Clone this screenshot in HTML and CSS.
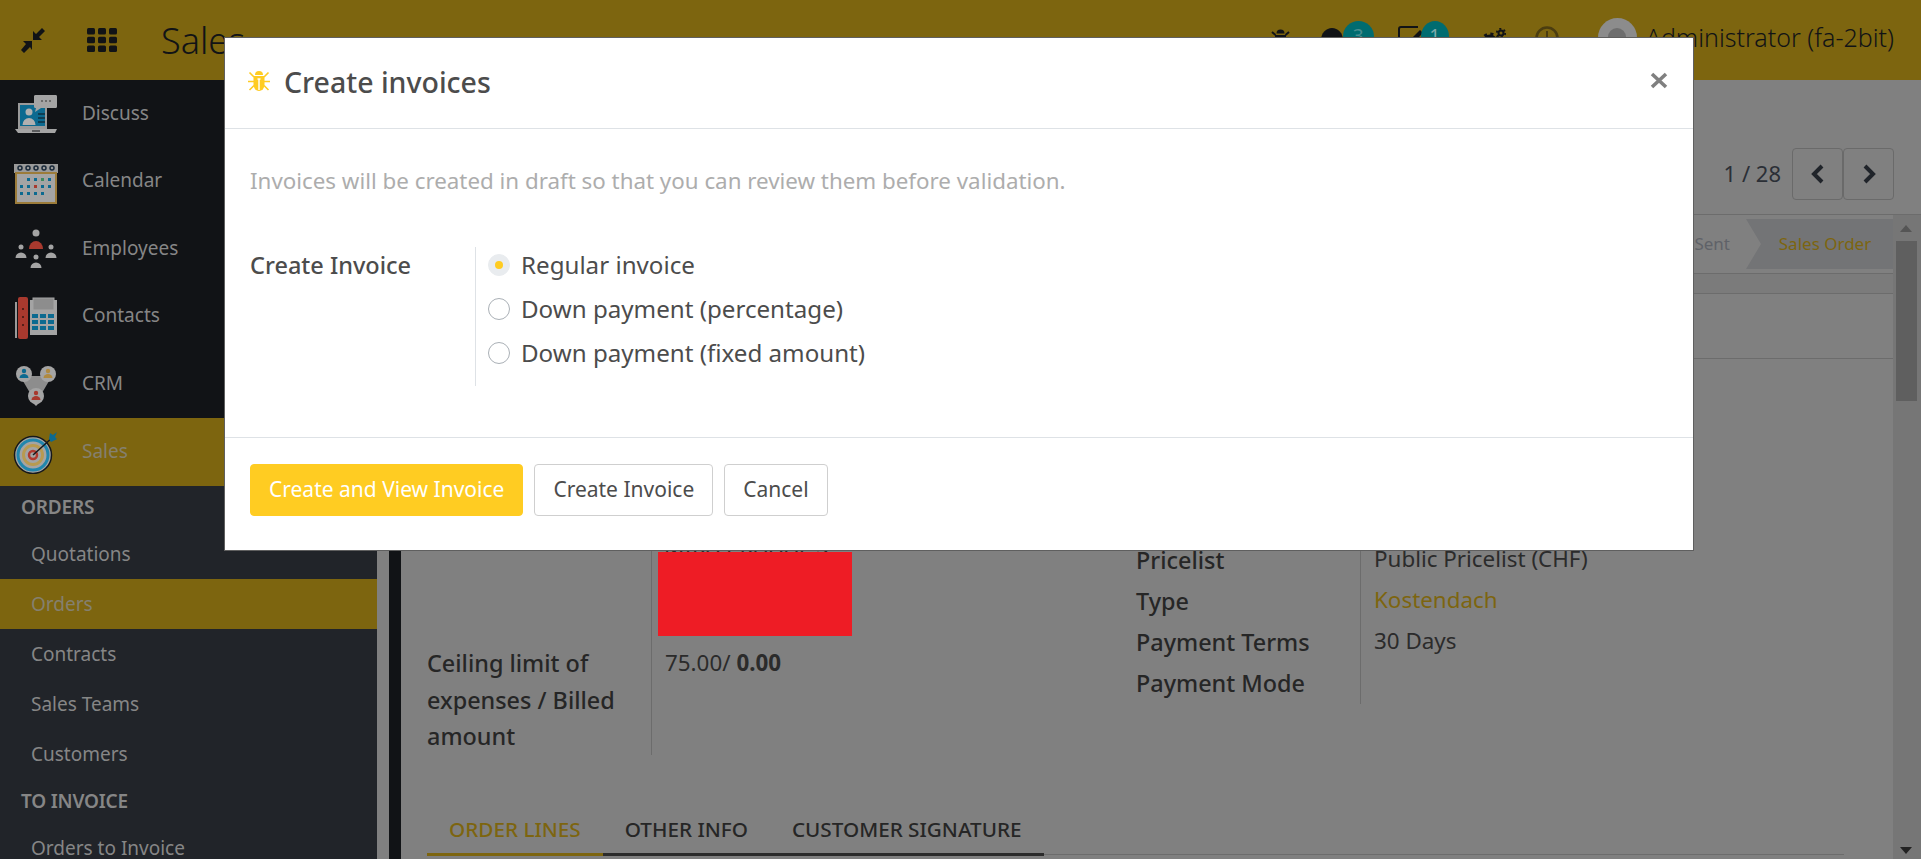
FILE: index.html
```html
<!DOCTYPE html>
<html lang="en">
<head>
<meta charset="UTF-8" />
<title>Sales - Create invoices</title>
<link rel="stylesheet" href="styles.css">
</head>
<body>

<!-- Top bar ------------------------------------------------------- -->
<header class="navbar">
  <svg class="nav-compress" viewBox="0 0 24 25"><path d="M24 3 21 0 15 6 12 3 12 12 21 12 18 9Z"/><path d="M0 22 3 25 9 19 11 22 11 13 2 13 5 16Z"/></svg>
  <svg class="nav-apps" viewBox="0 0 30 24"><g><rect x="0" y="0" width="8" height="6.5" rx="1.5"/><rect x="11" y="0" width="8" height="6.5" rx="1.5"/><rect x="22" y="0" width="8" height="6.5" rx="1.5"/><rect x="0" y="8.7" width="8" height="6.5" rx="1.5"/><rect x="11" y="8.7" width="8" height="6.5" rx="1.5"/><rect x="22" y="8.7" width="8" height="6.5" rx="1.5"/><rect x="0" y="17.4" width="8" height="6.5" rx="1.5"/><rect x="11" y="17.4" width="8" height="6.5" rx="1.5"/><rect x="22" y="17.4" width="8" height="6.5" rx="1.5"/></g></svg>
  <div class="nav-title">Sales</div>
  <div class="systray">
    <div class="tray-item tray-bug">
      <svg width="19" height="21" viewBox="0 0 19 21"><path d="M5.5 4.5a4 4 0 0 1 8 0Z"/><path d="M4 6h11v8a5.5 6 0 0 1-11 0Z"/><path d="M1 3l3.500 3M18 3l-3.500 3" stroke="#111316" stroke-width="2" fill="none"/></svg>
    </div>
    <div class="tray-item tray-chat">
      <svg width="22" height="24" viewBox="0 0 22 24"><ellipse cx="11" cy="12" rx="11" ry="12"/></svg>
      <span class="tray-badge tray-badge-wide">3</span>
    </div>
    <div class="tray-item tray-activity">
      <svg width="26" height="26" viewBox="0 0 26 26"><path d="M20 1H3a2 2 0 0 0-2 2v20a2 2 0 0 0 2 2h18a2 2 0 0 0 2-2V12" fill="none" stroke="#111316" stroke-width="2"/><path d="M8 18l14-14 3 3-14 14-4 1Z"/></svg>
      <span class="tray-badge">1</span>
    </div>
    <div class="tray-item tray-gears">
      <svg width="25" height="24" viewBox="0 0 25 24"><circle cx="9" cy="14" r="5.500" fill="none" stroke="#111316" stroke-width="4"/><circle cx="9" cy="14" r="8" fill="none" stroke="#111316" stroke-width="3" stroke-dasharray="3 3.300"/><circle cx="20" cy="5" r="2.500" fill="none" stroke="#111316" stroke-width="2"/><circle cx="20" cy="5" r="4.200" fill="none" stroke="#111316" stroke-width="1.800" stroke-dasharray="2 2.400"/></svg>
    </div>
    <div class="tray-item tray-clock">
      <svg width="24" height="24" viewBox="0 0 24 24"><circle cx="12" cy="12" r="10.500" fill="none" stroke="#4b3d10" stroke-width="2.500"/><path d="M12 5v8" stroke="#4b3d10" stroke-width="2"/></svg>
    </div>
    <div class="tray-item tray-avatar"><span class="avatar-head"></span></div>
    <div class="tray-user">Administrator (fa-2bit)</div>
  </div>
</header>

<div class="page">
  <!-- Sidebar ------------------------------------------------------- -->
  <nav class="sidebar">
    <ul class="app-list">
      <li class="app-row">
        <svg class="app-icon" viewBox="0 0 48 44">
          <rect x="6" y="9" width="29" height="26" fill="#9a9a9a"/><rect x="8" y="11" width="25" height="21" fill="#0c6a90"/>
          <circle cx="17" cy="18" r="3.500" fill="#b0b0b0"/><path d="M10.500 31a6.500 7 0 0 1 13 0Z" fill="#b0b0b0"/>
          <path d="M26 20h7M26 24h7M26 28h7" stroke="#111316" stroke-width="1"/>
          <path d="M3 35h42l-2 4H6Z" fill="#a4a4a4"/><path d="M20 37h8" stroke="#111316" stroke-width="1"/>
          <path d="M24 1h20a1.500 1.500 0 0 1 1 1.500v10a1.500 1.500 0 0 1-1 1.500H29l-6 4 1-4a1.500 1.500 0 0 1-2-1.500v-10A1.500 1.500 0 0 1 24 1Z" fill="#a4a4a4"/>
          <path d="M29 7h2M33 7h2M37 7h2" stroke="#333" stroke-width="1"/>
        </svg>
        <span>Discuss</span>
      </li>
      <li class="app-row">
        <svg class="app-icon" viewBox="0 0 48 44">
          <rect x="2" y="3" width="44" height="9" fill="#9a9a9a"/>
          <g fill="none" stroke="#1a2a3a" stroke-width="1.500"><circle cx="8" cy="7" r="2"/><circle cx="16" cy="7" r="2"/><circle cx="24" cy="7" r="2"/><circle cx="32" cy="7" r="2"/><circle cx="40" cy="7" r="2"/></g>
          <rect x="4" y="12" width="40" height="30" fill="#a4a4a4" stroke="#9c7c3a" stroke-width="2"/>
          <g fill="#0c6a90"><rect x="15" y="17" width="3" height="3"/><rect x="22" y="17" width="3" height="3"/><rect x="36" y="17" width="3" height="3"/><rect x="8" y="24" width="3" height="3"/><rect x="15" y="24" width="3" height="3"/><rect x="29" y="24" width="3" height="3"/><rect x="36" y="24" width="3" height="3"/><rect x="8" y="31" width="3" height="3"/><rect x="15" y="31" width="3" height="3"/><rect x="22" y="31" width="3" height="3"/><rect x="29" y="31" width="3" height="3"/></g>
          <rect x="29" y="17" width="3" height="3" fill="#3f8a5f"/><rect x="22" y="24" width="3" height="3" fill="#a8392e"/>
        </svg>
        <span>Calendar</span>
      </li>
      <li class="app-row">
        <svg class="app-icon" viewBox="0 0 48 44">
          <g fill="#a4a4a4"><circle cx="24" cy="4" r="3.500"/><circle cx="9" cy="18" r="2.500"/><circle cx="39" cy="18" r="2.500"/><circle cx="24" cy="28" r="2.500"/><path d="M3.500 29a5.500 5.500 0 0 1 11 0Z"/><path d="M33.500 29a5.500 5.500 0 0 1 11 0Z"/><path d="M18.500 39a5.500 5.500 0 0 1 11 0Z"/></g>
          <path d="M17 20a7 8 0 0 1 14 0Z" fill="#a8392e"/>
        </svg>
        <span>Employees</span>
      </li>
      <li class="app-row">
        <svg class="app-icon" viewBox="0 0 48 44">
          <rect x="3" y="6" width="2" height="36" fill="#9a9a9a"/><rect x="6" y="1" width="10" height="42" rx="2" fill="#a8392e"/>
          <g fill="#3a1410"><circle cx="11" cy="13" r="1"/><circle cx="11" cy="21" r="1"/><circle cx="11" cy="29" r="1"/></g>
          <rect x="18" y="4" width="27" height="35" fill="#a4a4a4"/><rect x="21" y="2" width="21" height="12" fill="#8d8d8d" stroke="#a4a4a4"/>
          <g fill="#0c6a90"><rect x="20" y="18" width="6" height="4"/><rect x="28" y="18" width="6" height="4"/><rect x="36" y="18" width="6" height="4"/><rect x="20" y="24" width="6" height="4"/><rect x="28" y="24" width="6" height="4"/><rect x="36" y="24" width="6" height="4"/><rect x="20" y="30" width="6" height="4"/><rect x="28" y="30" width="6" height="4"/><rect x="36" y="30" width="6" height="4"/></g>
        </svg>
        <span>Contacts</span>
      </li>
      <li class="app-row">
        <svg class="app-icon" viewBox="0 0 48 44">
          <path d="M8 12H40L27 34H21Z" fill="#8d8d8d"/>
          <circle cx="12" cy="10" r="8" fill="#a4a4a4"/><circle cx="36" cy="10" r="8" fill="#a4a4a4"/><circle cx="24" cy="32" r="8" fill="#a4a4a4"/>
          <path d="M21 39h6l-3 3Z" fill="#a4a4a4"/>
          <circle cx="12" cy="7" r="2.200" fill="#0c6a90"/><path d="M7.500 14a4.500 4 0 0 1 9 0Z" fill="#0c6a90"/>
          <circle cx="36" cy="7" r="2.200" fill="#b08a40"/><path d="M31.500 14a4.500 4 0 0 1 9 0Z" fill="#b08a40"/>
          <circle cx="24" cy="29" r="2.200" fill="#a8392e"/><path d="M19.500 36a4.500 4 0 0 1 9 0Z" fill="#a8392e"/>
        </svg>
        <span>CRM</span>
      </li>
      <li class="app-row app-row-active">
        <svg class="app-icon" viewBox="0 0 48 44">
          <circle cx="21" cy="25" r="18.500" fill="#a4a4a4" stroke="#15181c" stroke-width="1.500"/>
          <circle cx="21" cy="25" r="15" fill="none" stroke="#2186ad" stroke-width="3"/>
          <circle cx="21" cy="25" r="9.500" fill="none" stroke="#b89a50" stroke-width="3"/>
          <circle cx="21" cy="25" r="4" fill="none" stroke="#b0392e" stroke-width="2.500"/>
          <path d="M21 25 41 7" stroke="#15181c" stroke-width="1.500"/>
          <path d="M37 9l1-6 3 2 4-3-2 5 2 2-6 3Z" fill="#0c6a90"/>
        </svg>
        <span>Sales</span>
      </li>
    </ul>
    <div class="menu-section">
      <div class="menu-head">ORDERS</div>
      <a class="menu-link">Quotations</a>
      <a class="menu-link menu-link-active">Orders</a>
      <a class="menu-link">Contracts</a>
      <a class="menu-link">Sales Teams</a>
      <a class="menu-link">Customers</a>
      <div class="menu-head menu-head-next">TO INVOICE</div>
      <a class="menu-link">Orders to Invoice</a>
    </div>
  </nav>
  <div class="side-rail"></div>

  <!-- Form view ----------------------------------------------------- -->
  <main class="main">
    <div class="control-panel">
      <span class="pager-value">1 / 28</span>
      <div class="pager-btns">
        <button class="pager-btn"><svg width="14" height="20" viewBox="0 0 14 20"><path d="M11 2 3 10l8 8" fill="none" stroke="#20242a" stroke-width="4"/></svg></button>
        <button class="pager-btn"><svg width="14" height="20" viewBox="0 0 14 20"><path d="M3 2l8 8-8 8" fill="none" stroke="#20242a" stroke-width="4"/></svg></button>
      </div>
    </div>
    <div class="form-wrap">
      <div class="form-view">
        <div class="statusbar">
          <span class="status-step">Sent</span>
          <span class="status-step status-step-active">Sales Order</span>
        </div>
        <div class="sheet-band"></div>
        <div class="sheet">
          <div class="button-box"></div>
          <div class="groups">
            <div class="group group-left">
              <div class="field-label"></div>
              <div class="field-value">
                <div class="address-line">MIRA PRAHAL S</div>
                <div class="redacted"></div>
              </div>
              <div class="field-label field-label-wrap">Ceiling limit of expenses / Billed amount</div>
              <div class="field-value field-value-ceiling">75.00/ <b>0.00</b></div>
            </div>
            <div class="group group-right">
              <div class="field-label">Pricelist</div><div class="field-value">Public Pricelist (CHF)</div>
              <div class="field-label">Type</div><div class="field-value field-link">Kostendach</div>
              <div class="field-label">Payment Terms</div><div class="field-value">30 Days</div>
              <div class="field-label">Payment Mode</div><div class="field-value"></div>
            </div>
          </div>
          <div class="tabs">
            <a class="tab tab-active">ORDER LINES</a>
            <a class="tab">OTHER INFO</a>
            <a class="tab">CUSTOMER SIGNATURE</a>
          </div>
        </div>
      </div>
      <div class="scrollbar">
        <span class="scroll-up"></span>
        <span class="scroll-thumb"></span>
        <span class="scroll-down"></span>
      </div>
    </div>
  </main>
</div>

<!-- Dialog -------------------------------------------------------- -->
<div class="modal">
  <div class="modal-header">
    <svg class="modal-bug" viewBox="0 0 22 21">
      <path d="M7 5a4 4 0 0 1 8 0Z"/>
      <path d="M5.500 6h11v9a5.500 6 0 0 1-11 0Z"/>
      <path d="M1.500 2.500 6 7M20.500 2.500 16 7M0 11.500h6M22 11.500h-6M1.500 20 6 15.500M20.500 20 16 15.500" stroke="#ffcc22" stroke-width="1.600" fill="none"/>
      <path d="M11 9v11" stroke="#fff" stroke-width="1.400"/>
      <path d="M9.500 9h3" stroke="#fff" stroke-width="1.400"/>
    </svg>
    <h4 class="modal-title">Create invoices</h4>
    <svg class="modal-close" viewBox="0 0 18 17"><path d="M2 2l14 13M16 2 2 15" stroke="#808080" stroke-width="3.600"/></svg>
  </div>
  <div class="modal-body">
    <p class="modal-hint">Invoices will be created in draft so that you can review them before validation.</p>
    <div class="modal-form">
      <div class="modal-label">Create Invoice</div>
      <div class="radio-list">
        <label class="radio-row"><span class="radio radio-checked"></span>Regular invoice</label>
        <label class="radio-row"><span class="radio"></span>Down payment (percentage)</label>
        <label class="radio-row"><span class="radio"></span>Down payment (fixed amount)</label>
      </div>
    </div>
  </div>
  <div class="modal-footer">
    <button class="btn btn-primary">Create and View Invoice</button>
    <button class="btn">Create Invoice</button>
    <button class="btn">Cancel</button>
  </div>
</div>

</body>
</html>
```

FILE: styles.css
```css
* { box-sizing: border-box; margin: 0; padding: 0; }
html, body { height: 859px; overflow: hidden; }
body { font-family: "Noto Sans", "Open Sans", sans-serif; font-size: 22px; color: #262626; background: #808080; }
ul { list-style: none; }

/* --------------------  Top bar  -------------------- */
.navbar { display: flex; align-items: center; height: 80px; background: #7d650f; color: #111316; position: relative; }
.navbar svg { fill: #111316; flex: none; }
.nav-compress { width: 24px; height: 25px; margin-left: 21px; }
.nav-apps { width: 30px; height: 24px; margin-left: 42px; }
.nav-title { margin-left: 44px; font-size: 36px; font-weight: 300; line-height: 77px; }
.systray { display: flex; align-items: flex-start; margin-left: auto; padding-right: 27px; height: 80px; }
.tray-item { position: relative; padding-top: 28px; }
.tray-item svg { display: block; }
.tray-bug { width: 50px; padding-top: 29px; }
.tray-chat { width: 77px; }
.tray-activity { width: 83px; padding-top: 26px; }
.tray-gears { width: 54px; }
.tray-clock { width: 63px; padding-top: 26px; }
.tray-avatar { width: 39px; height: 39px; margin: 18px 9px 0 0; padding: 0; border-radius: 50%; background: #8c8c8c; overflow: hidden; }
.avatar-head { display: block; width: 18px; height: 30px; margin: 10px auto 0; border-radius: 9px; background: #6e6e6e; }
.tray-user { font-size: 25px; line-height: 75px; color: #111316; font-weight: 300; white-space: nowrap; }
.tray-badge { position: absolute; top: 21px; left: 22px; width: 31px; height: 31px; border-radius: 50%; background: #006c70; color: #4a8d8f; font-size: 19px; line-height: 30px; text-align: center; }
.tray-activity .tray-badge { left: 23px; width: 28px; height: 31px; top: 21px; color: #7fa9aa; }

/* --------------------  Sidebar  -------------------- */
.page { display: flex; height: 779px; overflow: hidden; }
.sidebar { width: 377px; flex: none; background: #212429; color: #868686; overflow: hidden; }
.app-list { background: #111316; height: 406px; }
.app-row { display: flex; align-items: center; height: 67.500px; font-size: 19px; }
.app-row span { margin-left: 22px; margin-bottom: 2px; }
.app-icon { width: 48px; height: 44px; margin-left: 12px; margin-top: 4px; flex: none; }
.app-row-active { height: 68px; background: #7d650f; color: #85806f; }
.app-row-active .app-icon { margin-top: 0; }
.menu-head { padding-left: 21px; height: 43px; line-height: 42px; font-size: 19px; font-weight: 600; letter-spacing: -.2px; }
.menu-head-next { height: 44px; line-height: 44px; }
.menu-link { display: block; height: 50px; line-height: 50px; padding-left: 31px; font-size: 19px; }
.menu-link-active { background: #7d650f; color: #85806f; }
.side-rail { width: 24px; flex: none; background: linear-gradient(to right, #808080 12px, #111316 12px); }

/* --------------------  Form view  ------------------ */
.main { flex: 1; display: flex; flex-direction: column; min-width: 0; }
.control-panel { height: 135px; flex: none; display: flex; justify-content: flex-end; align-items: flex-start; padding: 68px 27px 0 0; border-bottom: 1px solid #6c6c6c; }
.pager-value { margin-right: 11px; line-height: 50px; color: #2b2f36; }
.pager-btns { display: flex; }
.pager-btn { width: 51px; height: 52px; display: flex; align-items: center; justify-content: center; background: none; border: 1px solid #6a6a6a; border-radius: 4px; }
.form-wrap { flex: 1; display: flex; min-height: 0; }
.form-view { flex: 1; min-width: 0; }
.statusbar { height: 59px; display: flex; justify-content: flex-end; align-items: center; border-bottom: 1px solid #6c6c6c; font-size: 17px; color: #5f6268; }
.status-step { line-height: 50px; }
.status-step-active { width: 147px; height: 50px; margin-left: 16px; text-align: center; padding-left: 11px; color: #7d650f; background: #737476; clip-path: polygon(0 0, 100% 0, 100% 100%, 0 100%, 15px 50%); }
.sheet-band { height: 19px; background: #7b7b7b; }
.sheet { height: 580px; border-top: 1px solid #6c6c6c; padding-left: 26px; }
.button-box { height: 65px; margin-left: -26px; border-bottom: 1px solid #6c6c6c; }
.groups { display: grid; grid-template-columns: 709px 1fr; padding-top: 166px; }
.group { display: grid; grid-template-columns: 224px 1fr; align-items: start; }
.group-right { margin-top: 15px; grid-auto-rows: 41px; }
.field-label { font-weight: 500; color: #262626; line-height: 41px; font-size: 23.400px; }
.field-value { border-left: 1px solid #6c6c6c; padding-left: 13px; line-height: 38px; height: 100%; color: #2b2b2b; font-size: 22.400px; }
.field-link { color: #7d650f; }
.group-left .field-value { padding-left: 6px; }
.address-line { height: 27px; line-height: 42px; overflow: hidden; padding-left: 6px; }
.redacted { width: 194px; height: 84px; background: #ee1c25; }
.field-label-wrap { padding-top: 9px; line-height: 36.500px; width: 205px; }
.group-left .field-value-ceiling { padding: 9px 0 0 13px; line-height: 36.500px; }
.tabs { display: flex; width: 1417px; margin-top: 51px; border-bottom: 1px solid #6c6c6c; height: 49px; }
.tab { padding: 0 22px; height: 50px; line-height: 46px; font-size: 20.700px; font-weight: 500; color: #262626; border-bottom: 3px solid #2b2b2b; }
.tab-active { color: #7d650f; border-bottom-color: #7d650f; }
.scrollbar { width: 28px; flex: none; background: #767676; position: relative; padding: 26px 4px 0 3px; }
.scroll-thumb { display: block; height: 160px; background: #5f5f5f; }
.scroll-up { position: absolute; top: 10px; left: 7px; border: solid transparent; border-width: 0 6px 7px; border-bottom-color: #555; }
.scroll-down { position: absolute; top: 632px; left: 7px; border: solid transparent; border-width: 7px 6px 0; border-top-color: #222; }

/* --------------------  Dialog  --------------------- */
.modal { position: absolute; top: 38px; left: 225px; width: 1468px; height: 512px; display: flex; flex-direction: column; background: #fff; outline: 1px solid #5f5f5f; }
.modal-header { height: 91px; flex: none; display: flex; align-items: center; padding: 0 25px 0 23px; border-bottom: 1px solid #dee2e6; }
.modal-bug { width: 22px; height: 21px; fill: #ffcc22; margin-right: 14px; position: relative; top: -3px; }
.modal-title { font-size: 28.500px; font-weight: 500; color: #4c4c4c; line-height: 1; margin-top: -2px; }
.modal-close { width: 18px; height: 17px; margin-left: auto; margin-top: -6px; }
.modal-body { flex: 1; padding: 0 25px; color: #4c4c4c; }
.modal-hint { margin-top: 37px; line-height: 30px; color: #adadad; font-size: 22.350px; }
.modal-form { display: flex; margin-top: 51px; font-size: 24.150px; }
.modal-label { width: 225px; font-weight: 500; font-size: 23.500px; line-height: 36px; }
.radio-list { height: 139px; border-left: 1px solid #dee2e6; padding-left: 12px; }
.radio-row { display: flex; align-items: center; height: 44px; }
.radio-row:first-child { margin-top: -5px; }
.radio { width: 22px; height: 22px; margin-right: 11px; border: 1px solid #aab0b6; border-radius: 50%; flex: none; position: relative; top: 1px; }
.radio-checked { background: #e9ecef; border-color: #e9ecef; }
.radio-checked::after { content: ""; position: absolute; top: 6px; left: 6px; width: 8px; height: 8px; border-radius: 50%; background: #ffcc22; }
.modal-footer { height: 113px; flex: none; display: flex; gap: 11px; padding: 26px 25px 0; border-top: 1px solid #dee2e6; }
.btn { height: 52px; padding: 0 18px 2px; font: 21px "Noto Sans", sans-serif; color: #4c4c4c; background: #fff; border: 1px solid #cfcfcf; border-radius: 4px; }
.btn-primary { color: #fff; background: #ffcc22; border-color: #ffcc22; }
```
